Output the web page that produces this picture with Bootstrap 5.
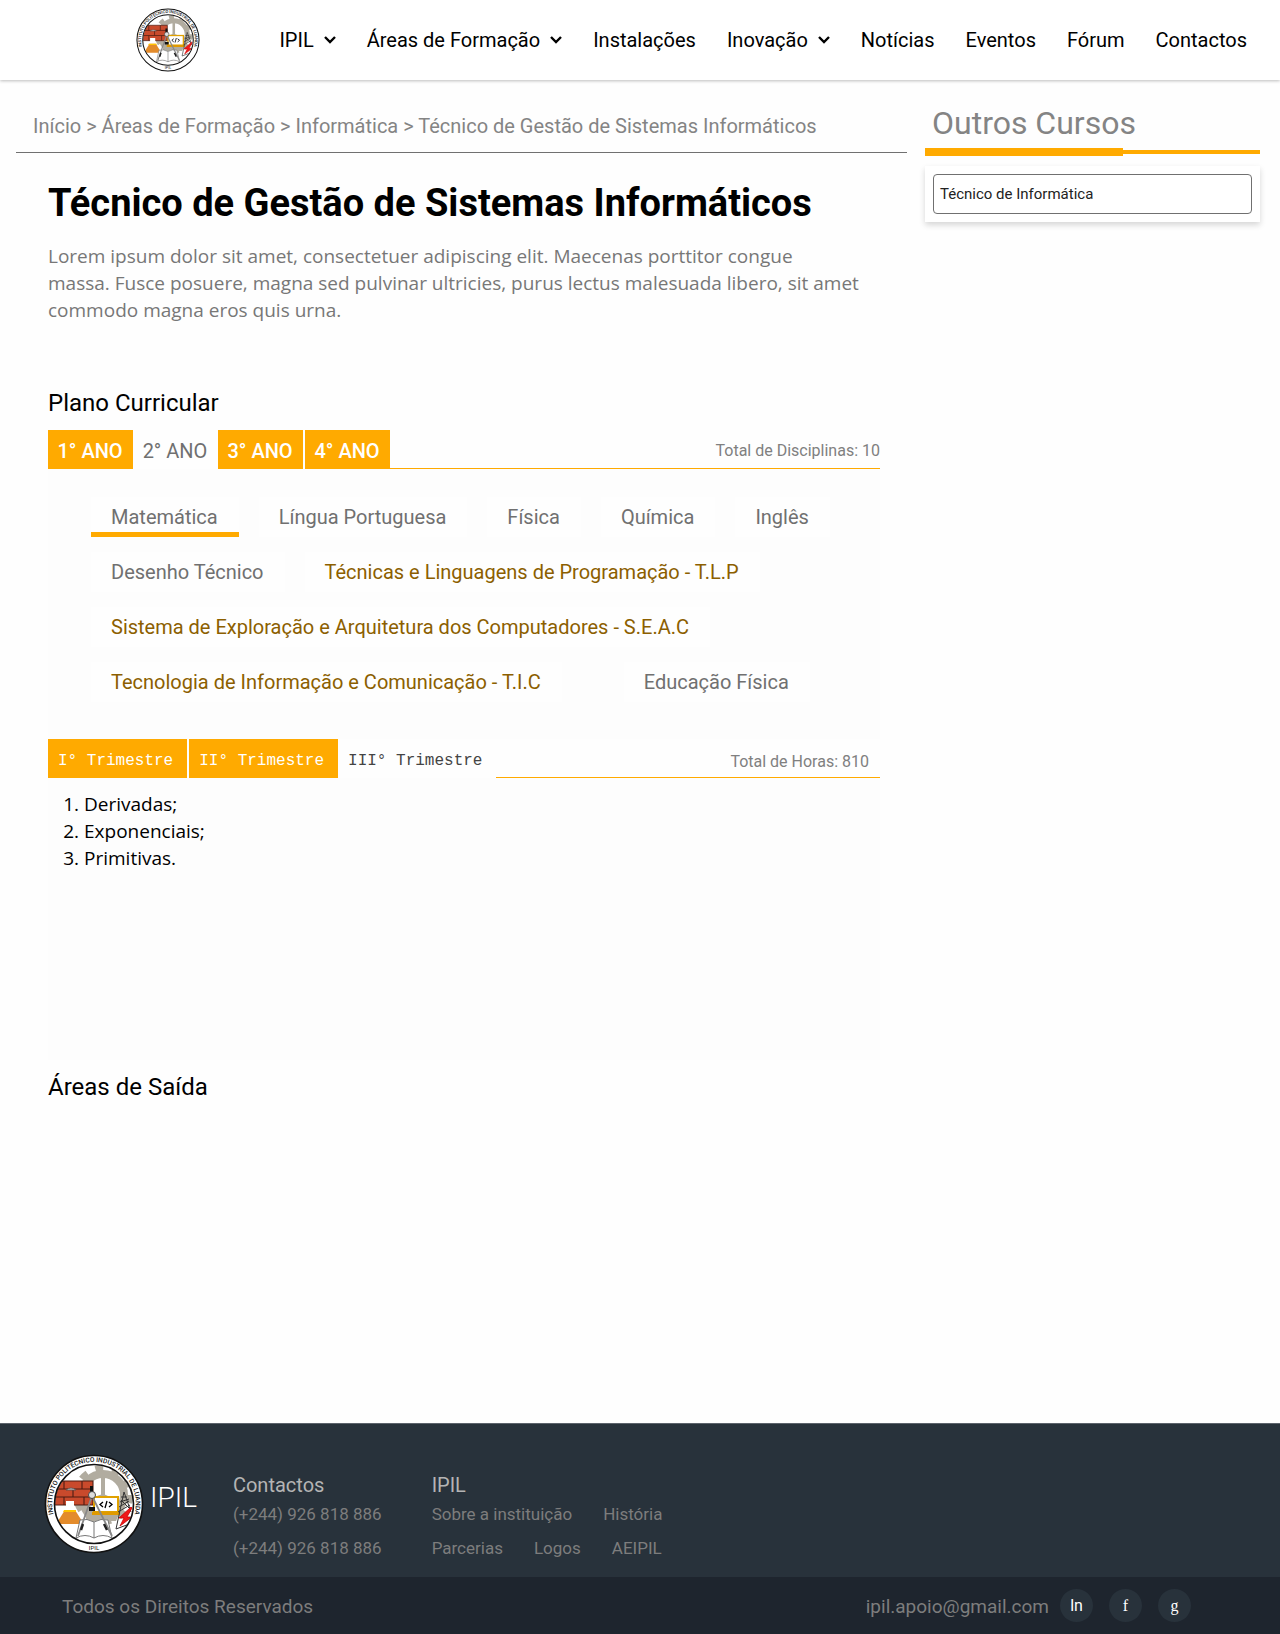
<!DOCTYPE html>
<html lang="pt">
<head>
<meta charset="utf-8">
<meta name="viewport" content="width=device-width, initial-scale=1">
<title>Técnico de Gestão de Sistemas Informáticos - IPIL</title>
<link href="https://cdn.jsdelivr.net/npm/bootstrap@5.3.0/dist/css/bootstrap.min.css" rel="stylesheet">
<style>
:root{--amber:#ffaa00;--ink:#707070}
body{font-family:Roboto,sans-serif;font-size:20px;line-height:24px;background:#fefefe;color:#000}
a{text-decoration:none;color:inherit}
.topbar{min-height:80px;background:#fff;box-shadow:0 1px 3px rgba(0,0,0,.26);padding:0 33px 0 136px}
.topbar .navbar-nav .nav-link{color:#000;padding:0;display:flex;align-items:center;gap:10px;white-space:nowrap}
.topbar .navbar-nav{gap:31px}
.chev{width:12px;height:8px;fill:none;stroke:#000;stroke-width:2.4}
.page-body{padding:0 20px 0 16px;gap:18px}
.trail{padding:34px 17px 14px;border-bottom:1px solid var(--ink);color:#848484}
.course{padding:0 27px 0 32px}
.course-title{font-size:38px;line-height:44px;font-weight:700;margin:28px 0 18px}
.reading{font-family:"Open Sans","Noto Sans",sans-serif;font-size:19px;line-height:27px}
.intro{color:#777;margin:0 0 65px}
.section-title{font-size:24px;line-height:28px;font-weight:400;margin:0 0 13px}
.tab-row{height:39px}
.tab-row button{border:0;background:var(--amber);color:#fff;height:39px;padding:3px 10px 0 9px;font-weight:500}
.tab-row button.current{background:transparent;color:var(--ink);font-weight:400}
.tab-row .spaced{margin-left:2px}
.years button{width:85px}
.terms button{font-family:"Liberation Mono",monospace;font-size:16px;font-weight:400;padding:5px 14px 0 10px}
.terms button.current{color:#444}
.tab-rule{border-bottom:1px solid var(--amber);font-size:16px;color:#808080;padding-top:4px}
.terms .tab-rule{padding:7px 11px 0 0}
.pane{background:#fdfdfd}
.subjects{padding:28px 0 37px 43px;row-gap:15px;column-gap:20px}
.subjects button{border:0;background:#fefefe;color:var(--ink);height:40px;padding:0 21px 0 20px;text-align:left}
.subjects button.current{border-bottom:5px solid var(--amber);padding-top:5px}
.subjects button.technical{color:#8c5f00}
.subjects .wide-end{margin-right:42px}
.topics{margin:0;padding:13px 0 0 36px;min-height:282px}
.exits{margin-top:13px}
.side{flex:0 0 335px}
.side-title{font-size:32px;line-height:38px;font-weight:400;color:#848484;margin:0;padding:24px 8px 6px 7px}
.side-bar{height:8px;background:linear-gradient(var(--amber),var(--amber)) 0 50%/100% 4px no-repeat}
.side-bar span{display:block;width:59%;height:8px;background:var(--amber)}
.course-box{margin-top:10px;padding:8px;background:#fff;box-shadow:0 3px 6px rgba(0,0,0,.16)}
.course-box a{display:flex;align-items:center;height:40px;border:1px solid var(--ink);border-radius:4px;padding:0 6px;font-size:15px;color:#222}
.foot{background:#28323b;border-top:1px solid #5c636b;color:#7d7d7d;font-size:17px;min-height:154px;padding:30px 44px 19px 44px}
.foot-name{font-size:28px;line-height:32px;font-weight:300;color:#fff;margin:28px 0 0 6px}
.foot h2{font-size:20px;line-height:24px;font-weight:400;color:#b4b4b4;margin:0 0 7px}
.foot-col{padding-top:19px}
.foot-phones{margin:0 50px 0 36px}
.foot-line{line-height:20px;margin-bottom:14px;display:flex;gap:31px}
.foot-end{background:#1e252e;color:#7d7d7d;font-size:19px;min-height:57px;padding:0 89px 0 62px}
.foot-text{padding-top:2px}
.socials{gap:16px;margin-left:11px}
.social{width:33px;height:33px;border-radius:50%;background:#28323b;color:#fff;font-size:16px;display:flex;align-items:center;justify-content:center}
.serif-mark{font-family:"Liberation Serif",serif}
</style>
<script src="https://cdn.jsdelivr.net/npm/bootstrap@5.3.0/dist/js/bootstrap.bundle.min.js"></script>
</head>
<body class="d-flex flex-column min-vh-100">

<header>
  <nav class="navbar navbar-expand-lg topbar" aria-label="Principal">
    <a href="#" aria-label="IPIL">
      <svg width="64" height="64" viewBox="0 0 100 100" class="d-block">
        <defs>
          <path id="ring" d="M9.500 60 A41.800 41.800 0 1 1 90.500 60"/>
          <clipPath id="disc"><circle cx="50" cy="50" r="39"/></clipPath>
        </defs>
        <g id="crest">
          <circle cx="50" cy="50" r="48.500" fill="#fff" stroke="#111" stroke-width="1.600"/>
          <g clip-path="url(#disc)">
            <circle cx="59" cy="41" r="21" fill="#fff" stroke="#b1aca0" stroke-width="8"/>
            <circle cx="59" cy="41" r="27" fill="none" stroke="#b1aca0" stroke-width="6" stroke-dasharray="8 9"/>
            <path d="M59 20v35M40 49l19-7 20 9" stroke="#b1aca0" stroke-width="4" fill="none"/>
            <path d="M36 54h42l-6 13H44z" fill="#b1aca0"/>
            <rect x="8" y="27" width="41" height="24" fill="#c94a2c"/>
            <path d="M8 27h41v24H8M8 35h41M8 43h41M20 27v8M38 27v8M29 35v8M20 43v8M40 43v8" stroke="#4c1c13" stroke-width="1.100" fill="none"/>
            <path d="M22 36q5-4 10 0z" fill="#c9c9c9" stroke="#555" stroke-width=".8"/>
            <path d="M22 47h8v8l8 12q1 3-2 3H16q-3 0-2-3l8-12z" fill="#fff"/>
            <path d="M21 56h10l7 11q1 3-2 3H16q-3 0-2-3z" fill="#e38b2b"/>
            <path d="M20 56h12v2H19z" fill="#ffc400"/>
            <path d="M32 84q9-5 18 0 9-5 18 0L64 66q-7-2-14 2-7-4-14-2zM50 68v16" fill="#fff" stroke="#777" stroke-width="1"/>
            <rect x="50" y="43" width="24" height="15" fill="#fff" stroke="#e0a100" stroke-width="2"/>
            <path d="M48 58h28v3H48z" fill="#e09a00"/>
            <path d="M59 48l-3 2.500 3 2.500M65 48l3 2.500-3 2.500M63 47l-2 7" fill="none" stroke="#000" stroke-width="1.300"/>
            <path d="M48 42L34 82M48 42l20 40" stroke="#888" stroke-width="1.800" fill="none"/>
            <path d="M39 70l-2 6M60 70l3 6" stroke="#222" stroke-width="2.400"/>
            <rect x="46" y="32" width="3" height="6" fill="#111"/>
            <circle cx="48" cy="41" r="3.500" fill="#ddd" stroke="#444"/>
            <rect x="45" y="53" width="6" height="4" fill="#111"/>
            <path d="M80 38l-8 37 16-6M80 38l7 20M77 43h6M76 48l9-3M75 53l10-6M74 58l12-7M77 46l9 9" stroke="#333" stroke-width="1" fill="none"/>
            <path d="M87 53l-12 11h5l-4 8 12-9h-5l5-9z" fill="#f01818" stroke="#c00" stroke-width=".8"/>
          </g>
          <circle cx="50" cy="50" r="39.500" fill="none" stroke="#111" stroke-width="1.600"/>
          <text font-family="Roboto, sans-serif" font-size="6.600" font-weight="500" fill="#111"><textPath href="#ring" startOffset="50%" text-anchor="middle">INSTITUTO POLITÉCNICO INDUSTRIAL DE LUANDA</textPath></text>
          <text x="50" y="96" font-family="Roboto, sans-serif" font-size="6" text-anchor="middle" fill="#111">IPIL</text>
        </g>
      </svg>
    </a>
    <button class="navbar-toggler" type="button" data-bs-toggle="collapse" data-bs-target="#menu" aria-label="Menu"><span class="navbar-toggler-icon"></span></button>
    <div class="collapse navbar-collapse" id="menu">
      <div class="navbar-nav ms-auto">
        <a class="nav-link" href="#">IPIL <svg class="chev"><path d="M1 1l5 5 5-5"/></svg></a>
        <a class="nav-link" href="#">Áreas de Formação <svg class="chev"><path d="M1 1l5 5 5-5"/></svg></a>
        <a class="nav-link" href="#">Instalações</a>
        <a class="nav-link" href="#">Inovação <svg class="chev"><path d="M1 1l5 5 5-5"/></svg></a>
        <a class="nav-link" href="#">Notícias</a>
        <a class="nav-link" href="#">Eventos</a>
        <a class="nav-link" href="#">Fórum</a>
        <a class="nav-link" href="#">Contactos</a>
      </div>
    </div>
  </nav>
</header>

<div class="page-body d-flex flex-column flex-lg-row align-items-lg-start mb-5">
  <main class="flex-grow-1">
    <nav class="trail" aria-label="Localização">
      <a href="#">Início</a> &gt; <a href="#">Áreas de Formação</a> &gt; <a href="#">Informática</a> &gt; <a href="#">Técnico de Gestão de Sistemas Informáticos</a>
    </nav>
    <div class="course">
      <h1 class="course-title">Técnico de Gestão de Sistemas Informáticos</h1>
      <p class="reading intro">Lorem ipsum dolor sit amet, consectetuer adipiscing elit. Maecenas porttitor congue <br class="d-none d-lg-inline">massa. Fusce posuere, magna sed pulvinar ultricies, purus lectus malesuada libero, sit amet commodo magna eros quis urna.</p>

      <h2 class="section-title">Plano Curricular</h2>
      <div class="tab-row years d-flex">
        <button type="button">1° ANO</button>
        <button type="button" class="current">2° ANO</button>
        <button type="button">3° ANO</button>
        <button type="button" class="spaced">4° ANO</button>
        <div class="tab-rule flex-grow-1 d-flex align-items-center justify-content-end">Total de Disciplinas: 10</div>
      </div>
      <div class="pane subjects d-flex flex-wrap">
        <button type="button" class="current">Matemática</button>
        <button type="button">Língua Portuguesa</button>
        <button type="button">Física</button>
        <button type="button">Química</button>
        <button type="button">Inglês</button>
        <button type="button">Desenho Técnico</button>
        <button type="button" class="technical">Técnicas e Linguagens de Programação - T.L.P</button>
        <button type="button" class="technical">Sistema de Exploração e Arquitetura dos Computadores - S.E.A.C</button>
        <button type="button" class="technical wide-end">Tecnologia de Informação e Comunicação - T.I.C</button>
        <button type="button">Educação Física</button>
      </div>

      <div class="tab-row terms d-flex">
        <button type="button">I° Trimestre</button>
        <button type="button" class="spaced">II° Trimestre</button>
        <button type="button" class="current">III° Trimestre</button>
        <div class="tab-rule flex-grow-1 d-flex align-items-center justify-content-end">Total de Horas: 810</div>
      </div>
      <div class="pane"><ol class="reading topics">
        <li>Derivadas;</li>
        <li>Exponenciais;</li>
        <li>Primitivas.</li>
      </ol></div>
      <h2 class="section-title exits">Áreas de Saída</h2>
    </div>
  </main>
  <aside class="side">
    <h2 class="side-title">Outros Cursos</h2>
    <div class="side-bar"><span></span></div>
    <div class="course-box"><a href="#">Técnico de Informática</a></div>
  </aside>
</div>

<footer class="mt-auto">
  <div class="foot d-flex flex-wrap">
    <div class="d-flex align-items-start">
      <svg width="100" height="100" viewBox="0 0 100 100"><use href="#crest"/></svg>
      <span class="foot-name">IPIL</span>
    </div>
    <div class="foot-col foot-phones">
      <h2>Contactos</h2>
      <a class="foot-line" href="#">(+244) 926 818 886</a>
      <a class="foot-line mb-0" href="#">(+244) 926 818 886</a>
    </div>
    <div class="foot-col">
      <h2>IPIL</h2>
      <div class="foot-line"><a href="#">Sobre a instituição</a><a href="#">História</a></div>
      <div class="foot-line mb-0"><a href="#">Parcerias</a><a href="#">Logos</a><a href="#">AEIPIL</a></div>
    </div>
  </div>
  <div class="foot-end d-flex flex-wrap align-items-center">
    <span class="foot-text">Todos os Direitos Reservados</span>
    <a class="foot-text ms-auto" href="#">ipil.apoio@gmail.com</a>
    <div class="socials d-flex">
      <a class="social" href="#">ln</a>
      <a class="social serif-mark" href="#">f</a>
      <a class="social serif-mark" href="#">g</a>
    </div>
  </div>
</footer>
</body>
</html>
